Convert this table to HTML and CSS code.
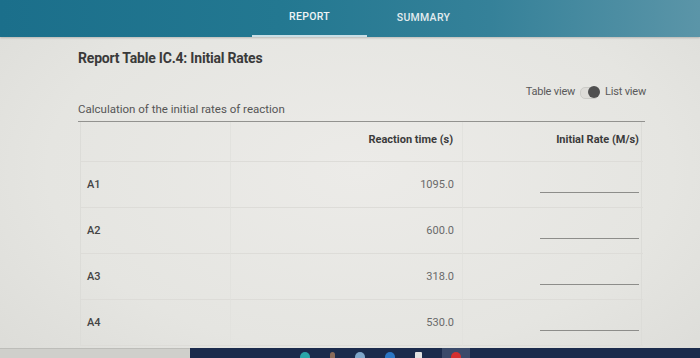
FILE: index.html
```html
<!DOCTYPE html>
<html>
<head>
<meta charset="utf-8">
<link rel="stylesheet" href="styles.css">
</head>
<body>
<div class="page">
  <header class="topbar">
    <nav class="tabs">
      <div class="tab active">REPORT</div>
      <div class="tab">SUMMARY</div>
    </nav>
  </header>
  <main class="content">
    <h1 class="title">Report Table IC.4: Initial Rates</h1>
    <div class="toggle-row">
      <span>Table view</span>
      <span class="switch"><span class="knob"></span></span>
      <span>List view</span>
    </div>
    <div class="caption">Calculation of the initial rates of reaction</div>
    <div class="table">
      <div class="cell head"></div>
      <div class="cell head num">Reaction time (s)</div>
      <div class="cell head rate">Initial Rate (M/s)</div>

      <div class="cell label">A1</div>
      <div class="cell num val">1095.0</div>
      <div class="cell rate"><span class="blank"></span></div>

      <div class="cell label">A2</div>
      <div class="cell num val">600.0</div>
      <div class="cell rate"><span class="blank"></span></div>

      <div class="cell label">A3</div>
      <div class="cell num val">318.0</div>
      <div class="cell rate"><span class="blank"></span></div>

      <div class="cell label">A4</div>
      <div class="cell num val">530.0</div>
      <div class="cell rate"><span class="blank"></span></div>
    </div>
  </main>
  <footer class="bottom">
    <div class="bottom-left"></div>
    <div class="taskbar">
      <span class="ti c1"></span>
      <span class="ti c2"></span>
      <span class="ti c3"></span>
      <span class="ti c4"></span>
      <span class="ti c5"></span>
      <span class="ti-slot"><span class="ti c6"></span></span>
    </div>
  </footer>
</div>
</body>
</html>
```
FILE: styles.css
```css
* { box-sizing: border-box; }
html, body {
  margin: 0;
  padding: 0;
  width: 700px;
  height: 358px;
  overflow: hidden;
}
body {
  font-family: Roboto, "Liberation Sans", sans-serif;
  background: #e3e3df;
}
.page {
  width: 700px;
  height: 358px;
  display: flex;
  flex-direction: column;
  background: radial-gradient(ellipse 520px 300px at 360px 170px, #ecebe8 0%, #e5e5e1 60%, #dadad6 100%);
}
.topbar {
  height: 37px;
  flex: none;
  background: linear-gradient(90deg, #1b6f8b 0%, #237891 40%, #358199 70%, #5b95a8 100%);
  display: flex;
  align-items: stretch;
  box-shadow: 0 1px 2px rgba(0,0,0,0.2);
}
.tabs {
  margin-left: 252px;
  display: flex;
}
.tab {
  color: #eef4f6;
  font-size: 10.5px;
  font-weight: 500;
  letter-spacing: 0.3px;
  display: flex;
  align-items: center;
  justify-content: center;
  padding-bottom: 3px;
}
.tab.active {
  width: 115px;
  border-bottom: 2px solid #c9dfe6;
}
.tab:not(.active) {
  margin-left: 29px;
  width: 55px;
  color: #e3ecef;
}
.content {
  flex: 1;
  padding-left: 78px;
  display: flex;
  flex-direction: column;
}
.title {
  margin: 12px 0 0 0;
  font-size: 14px;
  font-weight: 700;
  color: #3a3a3a;
  line-height: 18px;
  letter-spacing: -0.2px;
}
.toggle-row {
  margin-top: 18px;
  width: 568px;
  display: flex;
  justify-content: flex-end;
  align-items: center;
  gap: 1px;
  font-size: 11px;
  color: #5a5a5a;
  line-height: 14px;
  letter-spacing: -0.2px;
}
.switch {
  width: 24px;
  height: 12px;
  position: relative;
  display: inline-block;
  margin: 0 2px;
}
.switch::before {
  content: "";
  position: absolute;
  left: 2px;
  top: 1px;
  width: 17px;
  height: 10px;
  border-radius: 5px;
  border: 1px solid #cbcbc7;
  background: #dddcd8;
}
.knob {
  position: absolute;
  right: 2px;
  top: 0;
  width: 12px;
  height: 12px;
  border-radius: 50%;
  background: #505050;
}
.caption {
  margin-top: 3px;
  font-size: 11.5px;
  color: #555;
  line-height: 14px;
  width: 567px;
  padding-bottom: 5px;
  border-bottom: 1px solid #92928f;
}
.table {
  margin-left: 2px;
  width: 562px;
  display: grid;
  grid-template-columns: 150px 232px 180px;
  grid-template-rows: 40px 46px 46px 46px 46px;
  border-left: 1px solid #dcdcd8;
  border-right: 1px solid #dcdcd8;
}
.cell {
  display: flex;
  align-items: center;
  font-size: 11px;
  color: #444;
  border-bottom: 1px solid #dddcd8;
  border-right: 1px solid #e2e2de;
}
.cell:nth-child(3n) { border-right: none; }
.head {
  font-weight: 700;
  color: #3b3b3b;
  font-size: 11px;
  padding-bottom: 4px;
}
.label {
  padding-left: 6px;
  font-weight: 500;
  color: #444;
}
.num {
  justify-content: flex-end;
  padding-right: 8px;
}
.head.num { padding-right: 9px; }
.val {
  color: #6a6a6a;
  font-size: 11px;
}
.rate {
  justify-content: flex-end;
  padding-right: 4px;
}
.blank {
  display: block;
  width: 99px;
  height: 1px;
  background: #8d8d8a;
  margin-top: 16px;
}
.bottom {
  height: 10px;
  flex: none;
  display: flex;
}
.bottom-left {
  width: 190px;
  background: #cfcfcb;
  border-top: 1px solid #bdbdb9;
}
.taskbar {
  flex: 1;
  background: #1b2b4c;
  display: flex;
  align-items: flex-end;
  padding-left: 110px;
  gap: 20px;
}
.ti {
  width: 10px;
  height: 6px;
  border-radius: 5px 5px 0 0;
}
.ti-slot {
  display: flex;
  align-items: flex-end;
  justify-content: center;
  width: 28px;
  height: 10px;
  background: #3a4a6a;
}
.c1 { background: #2aa6a8; }
.c2 { background: #8a6a5a; width: 5px; }
.c3 { background: #7fa5c8; }
.c4 { background: #2c76c4; }
.c5 { background: #e2e2e2; width: 7px; border-radius: 1px 1px 0 0; }
.c6 { background: #d33030; }
```
